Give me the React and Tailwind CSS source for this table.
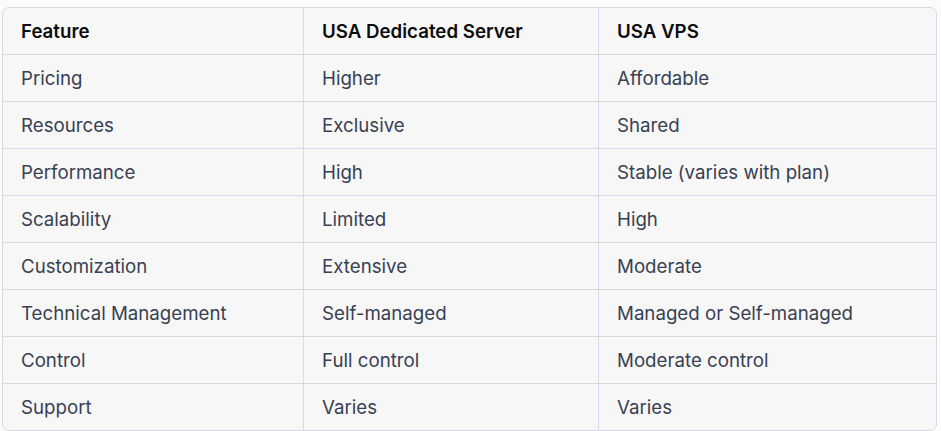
import React from "react";

const rows = [
  ["Pricing", "Higher", "Affordable"],
  ["Resources", "Exclusive", "Shared"],
  ["Performance", "High", "Stable (varies with plan)"],
  ["Scalability", "Limited", "High"],
  ["Customization", "Extensive", "Moderate"],
  ["Technical Management", "Self-managed", "Managed or Self-managed"],
  ["Control", "Full control", "Moderate control"],
  ["Support", "Varies", "Varies"],
];

function Row({ cells, header, last }) {
  return (
    <div
      className={
        "grid grid-cols-[300px_295px_1fr] " +
        (last ? "" : "border-b border-[#d9d9e3]")
      }
    >
      {cells.map((c, i) => (
        <div
          key={i}
          className={
            "h-[46px] flex items-center pl-[18px] pt-[2px] " +
            (i > 0 ? "border-l border-[#d9d9e3] " : "") +
            (header
              ? "font-semibold text-[#0d0d0d]"
              : "text-[#374151]")
          }
        >
          {c}
        </div>
      ))}
    </div>
  );
}

export default function App() {
  return (
    <div
      className="w-[941px] h-[431px] bg-[#fbfbfb] pt-[7px] pl-[2px] pr-[4px]"
      style={{ fontFamily: "Inter, 'Noto Sans', sans-serif" }}
    >
      <div className="rounded-[7px] border border-[#d9d9e3] bg-[#f7f7f8] overflow-hidden text-[18.7px] leading-none">
        <Row cells={["Feature", "USA Dedicated Server", "USA VPS"]} header />
        {rows.map((r, i) => (
          <Row key={i} cells={r} last={i === rows.length - 1} />
        ))}
      </div>
    </div>
  );
}
